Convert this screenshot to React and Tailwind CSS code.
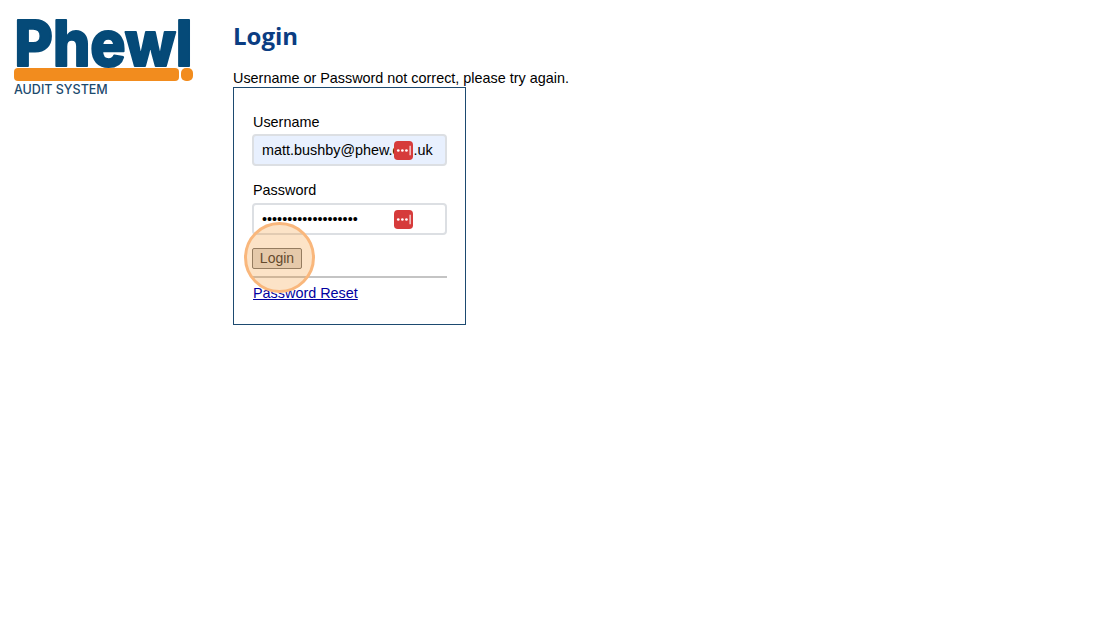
const LastPassIcon = ({ className }) => (
  <svg viewBox="0 0 20 20" className={className}>
    <rect width="20" height="20" rx="4" fill="#d63b3b" />
    <circle cx="4.5" cy="10" r="1.4" fill="#fff" />
    <circle cx="8.8" cy="10" r="1.4" fill="#fff" />
    <circle cx="13.1" cy="10" r="1.4" fill="#fff" />
    <rect x="16.4" y="5" width="1.1" height="10" fill="#fff" />
  </svg>
);

const Logo = () => (
  <div className="w-[181px] ml-[14px] mt-[12px]">
    <svg viewBox="0 0 181 56" className="block w-[181px] h-[56px] overflow-visible">
      <text
        x="0.5"
        y="53.5"
        textLength="178"
        lengthAdjust="spacingAndGlyphs"
        fontFamily="Inter, sans-serif"
        fontWeight="800"
        fontSize="63"
        fill="#054a78"
        stroke="#054a78"
        strokeWidth="2"
        strokeLinejoin="round"
      >
        Phewl
      </text>
    </svg>
    <div className="flex gap-[2px] h-[13px]">
      <div className="w-[165px] bg-[#f28c1e] rounded-[4px]"></div>
      <div className="w-[12px] bg-[#f28c1e] rounded-[5px]"></div>
    </div>
    <div className="mt-[2px] text-[12.5px] leading-[14px] font-medium text-[#1c4a6e] font-['Inter',sans-serif] whitespace-nowrap">
      AUDIT SYSTEM
    </div>
  </div>
);

export default function App() {
  return (
    <div className="flex min-h-[626px] bg-white font-['Liberation_Sans',Arial,sans-serif] text-[14.4px] text-black">
      <div className="w-[233px] shrink-0">
        <Logo />
      </div>
      <div>
        <h1 className="mt-[19px] h-[36px] leading-[34px] text-[24px] font-bold text-[#0b3d82] font-['Open_Sans',sans-serif]">
          Login
        </h1>
        <div className="mt-[15px] leading-[17px] whitespace-nowrap">
          Username or Password not correct, please try again.
        </div>
        <form className="w-[233px] h-[238px] border border-[#1d4a70] px-[18px] pt-[26px]">
          <label className="block leading-[17px] pl-[1px]">Username</label>
          <div className="relative mt-[3px]">
            <input
              readOnly
              value="matt.bushby@phew.org.uk"
              className="w-[195px] h-[32px] pl-[8px] pr-[6px] border-2 border-[#dcdfe3] rounded-[4px] bg-[#e8f0fe] outline-none"
            />
            <div className="absolute left-[142px] top-[7px] w-[20px] h-[19px] bg-[#e8f0fe]">
              <LastPassIcon className="w-[19px] h-[19px]" />
            </div>
          </div>
          <label className="block mt-[16px] pl-[1px] leading-[17px]">Password</label>
          <div className="relative mt-[4px]">
            <input
              readOnly
              type="password"
              value="abcdefghijklmnopqrs"
              className="w-[195px] h-[32px] pl-[8px] pr-[6px] border-2 border-[#dcdfe3] rounded-[4px] bg-white outline-none"
            />
            <LastPassIcon className="absolute left-[142px] top-[7px] w-[19px] h-[19px]" />
          </div>
          <button
            type="button"
            className="block mt-[13px] w-[50px] h-[21px] border border-[#767676] rounded-[2px] bg-[#e0dcd8] text-[14px] leading-[17px] text-[#333]"
          >
            Login
          </button>
          <hr className="mt-[7px] w-[195px] border-t-2 border-[#c4c4c4]" />
          <a href="#" className="block mt-[7px] leading-[17px] pl-[1px] text-[#0000a0] underline">
            Password Reset
          </a>
        </form>
      </div>
      <div className="absolute left-[244px] top-[222px] w-[71px] h-[71px] rounded-full border-[3px] border-[#f9b77c] bg-[#f58f1f]/25 pointer-events-none"></div>
    </div>
  );
}
